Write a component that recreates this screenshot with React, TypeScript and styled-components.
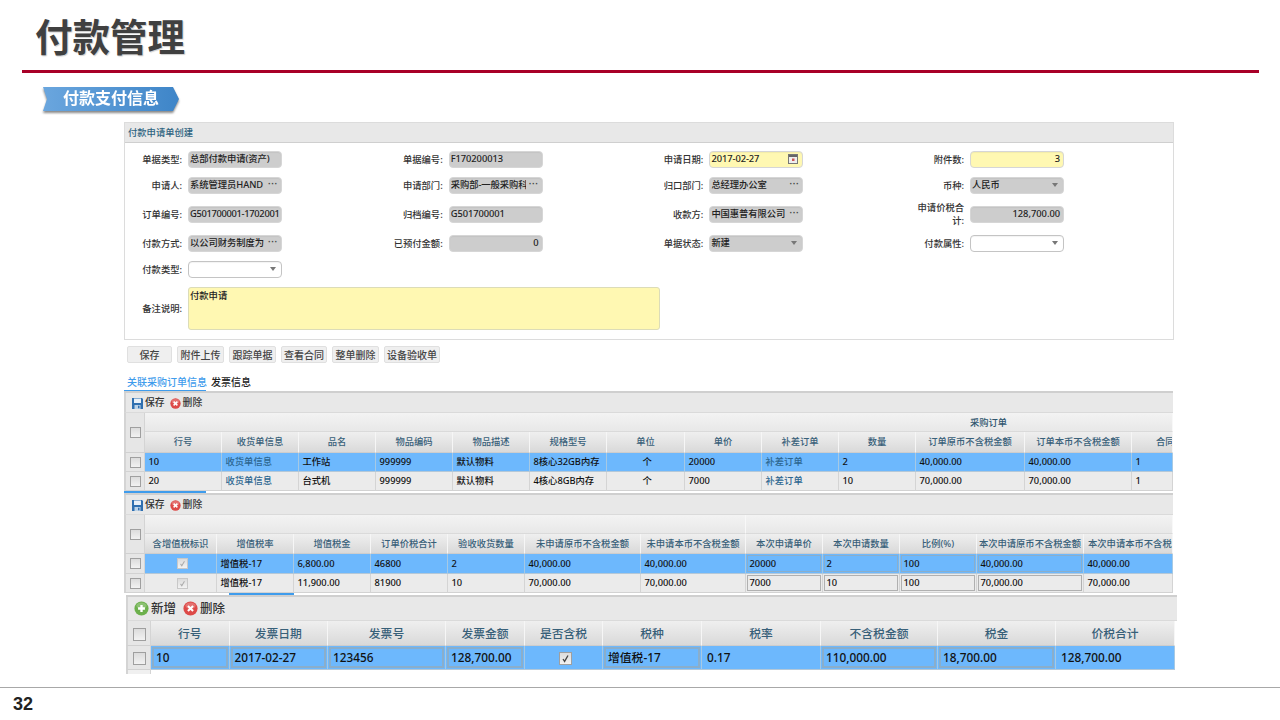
import React from "react";
import styled, { createGlobalStyle } from "styled-components";

const Global = createGlobalStyle`
  html, body { margin: 0; padding: 0; background: #fff; }
  body { font-family: "Noto Sans", "Noto Sans CJK SC", sans-serif; }
  * { box-sizing: border-box; }
`;

const CJK = `"Noto Sans CJK SC", "Noto Sans", sans-serif`;
const UI = `"Noto Sans", "Noto Sans CJK SC", sans-serif`;

const Page = styled.div`
  width: 1280px;
  height: 720px;
  display: flex;
  flex-direction: column;
  overflow: hidden;
  position: relative;
`;
const Header = styled.header`
  height: 70px;
  padding-left: 35px;
  display: flex;
  align-items: center;
`;
const Title = styled.h1`
  margin: 0;
  font: 700 37.5px/1 ${CJK};
  color: #404040;
  text-shadow: 1px 1px 1px rgba(60, 60, 60, 0.25);
`;
const Rule = styled.div`
  height: 3px;
  margin: 0 21px 0 22px;
  background: #a80028;
`;
const RibbonWrap = styled.div`
  margin: 14px 0 10px 43px;
  width: 136px;
  height: 25px;
  filter: drop-shadow(0 2px 1px rgba(40, 40, 40, 0.55));
`;
const Ribbon = styled.div`
  width: 136px;
  height: 24px;
  padding: 0 0 5px 20px;
  display: flex;
  align-items: center;
  background: linear-gradient(90deg, #6aa6de, #3e85c8);
  clip-path: polygon(0 0, 130px 0, 136px 12px, 130px 24px, 0 24px, 4px 12px);
  font: 700 16px/1 ${CJK};
  color: #fff;
`;
const Body = styled.main`
  margin-left: 124px;
  width: 1053px;
  display: flex;
  flex-direction: column;
  font: 500 9.3px/1.2 ${UI};
  color: #222;
`;
const Panel = styled.section`
  width: 1050px;
  border: 1px solid #dcdcdc;
`;
const PanelTitle = styled.div`
  height: 20px;
  padding-left: 3px;
  display: flex;
  align-items: center;
  background: #e8e8e8;
  border-bottom: 1px solid #cfcfcf;
  color: #2e6380;
`;
const FormBody = styled.div`
  padding: 3px 0 9px;
`;
const FormGrid = styled.div`
  display: grid;
  grid-template-columns: repeat(4, 260.7px);
  grid-template-rows: 26px 26px 32px 26px 26px;
`;
const Field = styled.div`
  display: grid;
  grid-template-columns: 57px 94px;
  column-gap: 6px;
  align-items: center;
`;
const Label = styled.label`
  text-align: right;
  white-space: pre-line;
  line-height: 13px;
  color: #333;
`;
const bg: Record<string, string> = { gray: "#cdcdcd", yellow: "#fff8b2", white: "#fff" };
const Input = styled.div<{ $tone: string; $right?: boolean }>`
  height: 17px;
  padding: 0 1px;
  display: flex;
  align-items: center;
  gap: 3px;
  background: ${(p) => bg[p.$tone]};
  border: 1px solid ${(p) => (p.$tone === "white" ? "#c4c4c4" : "#d6d6d6")};
  border-radius: 4px;
  box-shadow: inset 0 1px 1px rgba(0, 0, 0, 0.05);
  justify-content: ${(p) => (p.$right ? "flex-end" : "flex-start")};
  color: #222;
`;
const InputText = styled.span<{ $tight?: boolean }>`
  flex: 1;
  min-width: 0;
  overflow: hidden;
  white-space: nowrap;
  letter-spacing: ${(p) => (p.$tight ? "-0.3px" : "-0.05px")};
`;
const RightText = styled.span`
  margin-right: 2px;
  white-space: nowrap;
`;
const Dots = styled.span`
  flex: none;
  width: 10px;
  margin-right: 2px;
  font: 700 9px/1 "Liberation Sans", sans-serif;
  letter-spacing: 0.3px;
  color: #444;
  position: relative;
  top: -1px;
`;
const Caret = styled.span`
  flex: none;
  width: 0;
  height: 0;
  margin-right: 4px;
  border-left: 3.5px solid transparent;
  border-right: 3.5px solid transparent;
  border-top: 4px solid #777;
`;
const RemarkRow = styled.div`
  margin-top: 5px;
  display: grid;
  grid-template-columns: 57px 472px;
  column-gap: 6px;
  align-items: center;
`;
const Remark = styled.div`
  height: 43px;
  padding: 2px 1px;
  background: #fff8b2;
  border: 1px solid #dcdcb8;
  border-radius: 3px;
`;
const Actions = styled.div`
  margin: 6px 0 0 3px;
  display: flex;
  height: 17px;
  gap: 5px;
`;
const Action = styled.button<{ $w: number }>`
  width: ${(p) => p.$w}px;
  height: 17px;
  padding: 0;
  font: inherit;
  font-size: 10px;
  color: #444;
  background: #efefef;
  border: 1px solid #e0e0e0;
  border-radius: 2px;
`;
const Tabs = styled.div`
  margin-top: 9px;
  height: 19px;
  display: flex;
  align-items: center;
  padding-top: 2px;
`;
const Tab = styled.div<{ $active?: boolean }>`
  width: ${(p) => (p.$active ? "82px" : "auto")};
  padding-left: ${(p) => (p.$active ? "3px" : "5px")};
  height: 19px;
  display: flex;
  align-items: center;
  font-size: 10px;
  white-space: nowrap;
  color: ${(p) => (p.$active ? "#3f9cec" : "#222")};
  border-bottom: ${(p) => (p.$active ? "2px solid #3f9cec" : "2px solid transparent")};
`;
const Grid = styled.section<{ $w: number; $big?: boolean }>`
  width: ${(p) => p.$w}px;
  margin-left: ${(p) => (p.$big ? "2px" : "0")};
  background: #fff;
  border-top: 2px solid #cfcfcf;
  overflow: hidden;
  flex: none;
  ${(p) => (p.$big ? "font-size: 11.8px;" : "")}
`;
const Toolbar = styled.div<{ $big?: boolean }>`
  height: ${(p) => (p.$big ? 24 : 20)}px;
  display: flex;
  align-items: center;
  gap: ${(p) => (p.$big ? 7 : 5)}px;
  padding: ${(p) => (p.$big ? "0 0 0 6px" : "1px 0 0 6px")};
  background: #e8e8e8;
  border-bottom: 1px solid #dadada;
  border-left: 2px solid #d4d4d4;
`;
const Tool = styled.span<{ $big?: boolean }>`
  display: flex;
  align-items: center;
  gap: 2px;
  font-size: ${(p) => (p.$big ? 12.5 : 9.8)}px;
  color: #333;
`;
const Table = styled.table<{ $w: number }>`
  table-layout: fixed;
  width: ${(p) => p.$w}px;
  border-collapse: separate;
  border-spacing: 0;
`;
const Col = styled.col<{ $w: number }>`
  width: ${(p) => p.$w}px;
`;
const CheckHead = styled.th`
  background: #e6e6e6;
  border-left: 2px solid #d4d4d4;
  border-right: 1px solid #d4d4d4;
  border-bottom: 1px solid #d0d0d0;
  padding: 0;
  text-align: center;
`;
const GroupCell = styled.th<{ $h: number; $pl?: number }>`
  height: ${(p) => p.$h}px;
  padding: 1px 0 0 ${(p) => p.$pl ?? 0}px;
  font-weight: 500;
  text-align: center;
  color: #2f566e;
  background: linear-gradient(#f3f3f3, #e8e8e8);
  border-right: 1px solid #f8f8f8;
  border-bottom: 1px solid #dadada;
  overflow: hidden;
  white-space: nowrap;
`;
const HeadCell = styled.th<{ $h: number; $pl?: number }>`
  height: ${(p) => p.$h}px;
  padding: 0 0 0 ${(p) => p.$pl ?? 0}px;
  font-weight: 500;
  text-align: ${(p) => (p.$pl ? "left" : "center")};
  color: #386079;
  background: linear-gradient(#efefef, #d9d9d9);
  border-right: 1px solid #f6f6f6;
  border-bottom: 1px solid #cdcdcd;
  overflow: hidden;
  white-space: nowrap;
`;
const CheckCell = styled.td<{ $h: number }>`
  height: ${(p) => p.$h}px;
  padding: 0;
  text-align: center;
  background: #e6e6e6;
  border-left: 2px solid #d4d4d4;
  border-right: 1px solid #d4d4d4;
  border-bottom: 1px solid #d2d2d2;
`;
const Cell = styled.td<{ $h: number; $sel?: boolean; $kind?: string; $big?: boolean; $boxed?: boolean }>`
  height: ${(p) => p.$h}px;
  padding: ${(p) => (p.$boxed ? "1px" : `0 0 0 ${p.$big ? 5 : 3.5}px`)};
  background: ${(p) => (p.$sel ? "#6db8fd" : "#ebebeb")};
  border-right: 1px solid ${(p) => (p.$sel ? "#a6c9e4" : "#d4d4d4")};
  border-bottom: 1px solid ${(p) => (p.$sel ? "#b4c8d8" : "#d2d2d2")};
  color: ${(p) => (p.$kind === "link" ? "#2c6690" : "#111")};
  text-align: ${(p) => (p.$kind === "center" || p.$kind === "check" ? "center" : "left")};
  overflow: hidden;
  white-space: nowrap;
`;
const CellBox = styled.div<{ $sel?: boolean; $big?: boolean }>`
  height: 100%;
  display: flex;
  align-items: center;
  padding-left: ${(p) => (p.$big ? 2 : 1.5)}px;
  border: ${(p) => (p.$big ? 2 : 1)}px solid ${(p) => (p.$sel ? "#8aaecb" : "#b0b0b0")};
  overflow: hidden;
`;
const Box = styled.span<{ $big?: boolean; $faint?: boolean }>`
  display: inline-flex;
  align-items: center;
  justify-content: center;
  vertical-align: middle;
  width: ${(p) => (p.$big ? 13 : 11)}px;
  height: ${(p) => (p.$big ? 13 : 11)}px;
  background: linear-gradient(#dcdcdc, #f2f2f2);
  border: 1px solid ${(p) => (p.$faint ? "#c8c8c8" : "#9f9f9f")};
`;
const Stub = styled.div`
  width: 25px;
  height: 4px;
  margin-left: 2px;
  background: #f0f0f0;
  border-left: 2px solid #d4d4d4;
  border-right: 1px solid #d4d4d4;
`;
const Bar = styled.div<{ $ml: number; $w: number }>`
  height: 2px;
  margin-left: ${(p) => p.$ml}px;
  width: ${(p) => p.$w}px;
  background: #3f9cec;
  flex: none;
`;
const Footer = styled.footer`
  margin-top: auto;
  height: 33px;
  padding-left: 13px;
  display: flex;
  align-items: center;
  border-top: 1px solid #a8a8a8;
  font: 700 18px/1 "Liberation Sans", sans-serif;
  color: #222;
`;
const CalendarGlyph = styled.svg`
  flex: none;
  margin-right: 3px;
`;

const Check = ({ checked, big, faint }: { checked?: boolean; big?: boolean; faint?: boolean }) => (
  <Box $big={big} $faint={faint}>
    {checked && (
      <svg width={big ? 9 : 7} height={big ? 9 : 7} viewBox="0 0 9 9">
        <path d="M2 5l1.6 2.4L7 1.5" fill="none" stroke={faint ? "#aaa" : "#444"} strokeWidth="1.3" />
      </svg>
    )}
  </Box>
);
const SaveIcon = () => (
  <svg width="11" height="11" viewBox="0 0 11 11">
    <path d="M0 0h10l1 1v10H0z" fill="#2f6fb0" />
    <rect x="2" y="0.5" width="7" height="4.5" fill="#e8f0f8" />
    <rect x="2.5" y="7" width="6" height="4" fill="#bcd3e8" />
    <rect x="6" y="7.7" width="1.5" height="2.6" fill="#2f6fb0" />
  </svg>
);
const RoundIcon = ({ size, fill, plus }: { size: number; fill: string; plus?: boolean }) => (
  <svg width={size} height={size} viewBox="0 0 14 14">
    <circle cx="7" cy="7" r="6.6" fill={fill} />
    <ellipse cx="7" cy="4.4" rx="4.8" ry="3" fill="#fff" opacity="0.22" />
    {plus ? (
      <path d="M7 3.8v6.4M3.8 7h6.4" stroke="#fff" strokeWidth="2.2" />
    ) : (
      <path d="M4.6 4.6l4.8 4.8M9.4 4.6l-4.8 4.8" stroke="#fff" strokeWidth="1.9" />
    )}
  </svg>
);
const CalendarIcon = () => (
  <CalendarGlyph width="10" height="10" viewBox="0 0 10 10">
    <rect x="0.5" y="0.5" width="9" height="9" fill="#eee" stroke="#777" />
    <rect x="1" y="1" width="8" height="2" fill="#666" />
    <rect x="4" y="4.5" width="2.5" height="2.5" fill="#c55" />
  </CalendarGlyph>
);

type F = { label: string; text?: string; tone: string; tail?: "dots" | "caret" | "cal"; right?: boolean; tight?: boolean };
const fields: F[] = [
  { label: "单据类型:", text: "总部付款申请(资产)", tone: "gray" },
  { label: "单据编号:", text: "F170200013", tone: "gray" },
  { label: "申请日期:", text: "2017-02-27", tone: "yellow", tail: "cal" },
  { label: "附件数:", text: "3", tone: "yellow", right: true },
  { label: "申请人:", text: "系统管理员HAND", tone: "gray", tail: "dots" },
  { label: "申请部门:", text: "采购部-一般采购科", tone: "gray", tail: "dots" },
  { label: "归口部门:", text: "总经理办公室", tone: "gray", tail: "dots" },
  { label: "币种:", text: "人民币", tone: "gray", tail: "caret" },
  { label: "订单编号:", text: "G501700001-1702001", tone: "gray", tight: true },
  { label: "归档编号:", text: "G501700001", tone: "gray" },
  { label: "收款方:", text: "中国惠普有限公司", tone: "gray", tail: "dots" },
  { label: "申请价税合\n计:", text: "128,700.00", tone: "gray", right: true },
  { label: "付款方式:", text: "以公司财务制度为", tone: "gray", tail: "dots" },
  { label: "已预付金额:", text: "0", tone: "gray", right: true },
  { label: "单据状态:", text: "新建", tone: "gray", tail: "caret" },
  { label: "付款属性:", tone: "white", tail: "caret" },
  { label: "付款类型:", tone: "white", tail: "caret" },
];

const actions: [string, number][] = [
  ["保存", 45], ["附件上传", 47], ["跟踪单据", 47], ["查看合同", 46], ["整单删除", 47], ["设备验收单", 56],
];

type C = string | { t: string; k: "link" | "center" | "check" | "box" | "faint" };
type Head = { t: string; w: number; pl?: number };
type Def = {
  width: number;
  checkW: number;
  big?: boolean;
  rowH: number;
  headH: number;
  groupH?: number;
  groups?: { span: number; title?: string; pl?: number }[];
  cols: Head[];
  rows: { sel?: boolean; cells: C[] }[];
};

const link = (t: string): C => ({ t, k: "link" });
const ctr = (t: string): C => ({ t, k: "center" });
const bx = (t: string): C => ({ t, k: "box" });

const grid1: Def = {
  width: 1049,
  checkW: 21,
  rowH: 19,
  headH: 21,
  groupH: 19,
  groups: [{ span: 13, title: "采购订单", pl: 660 }],
  cols: [
    { t: "行号", w: 77 }, { t: "收货单信息", w: 77 }, { t: "品名", w: 77 }, { t: "物品编码", w: 77 },
    { t: "物品描述", w: 77 }, { t: "规格型号", w: 77 }, { t: "单位", w: 78 }, { t: "单价", w: 77 },
    { t: "补差订单", w: 77 }, { t: "数量", w: 77 }, { t: "订单原币不含税金额", w: 109 },
    { t: "订单本币不含税金额", w: 107 }, { t: "合同数量", w: 41, pl: 24 },
  ],
  rows: [
    { sel: true, cells: ["10", link("收货单信息"), "工作站", "999999", "默认物料", "8核心32GB内存", ctr("个"), "20000", link("补差订单"), "2", "40,000.00", "40,000.00", "1"] },
    { cells: ["20", link("收货单信息"), "台式机", "999999", "默认物料", "4核心8GB内存", ctr("个"), "7000", link("补差订单"), "10", "70,000.00", "70,000.00", "1"] },
  ],
};

const grid2: Def = {
  width: 1049,
  checkW: 21,
  rowH: 19.5,
  headH: 20,
  groupH: 19,
  groups: [{ span: 7 }, { span: 5 }],
  cols: [
    { t: "含增值税标识", w: 72 }, { t: "增值税率", w: 77 }, { t: "增值税金", w: 77 }, { t: "订单价税合计", w: 77 },
    { t: "验收收货数量", w: 77 }, { t: "未申请原币不含税金额", w: 116 }, { t: "未申请本币不含税金额", w: 105 },
    { t: "本次申请单价", w: 77 }, { t: "本次申请数量", w: 77 }, { t: "比例(%)", w: 77 },
    { t: "本次申请原币不含税金额", w: 107 }, { t: "本次申请本币不含税金额", w: 89, pl: 4 },
  ],
  rows: [
    { sel: true, cells: [{ t: "", k: "faint" }, "增值税-17", "6,800.00", "46800", "2", "40,000.00", "40,000.00", bx("20000"), bx("2"), bx("100"), bx("40,000.00"), "40,000.00"] },
    { cells: [{ t: "", k: "faint" }, "增值税-17", "11,900.00", "81900", "10", "70,000.00", "70,000.00", bx("7000"), bx("10"), bx("100"), bx("70,000.00"), "70,000.00"] },
  ],
};

const grid3: Def = {
  width: 1049,
  checkW: 25,
  big: true,
  rowH: 24,
  headH: 25,
  cols: [
    { t: "行号", w: 78.5 }, { t: "发票日期", w: 98.5 }, { t: "发票号", w: 118 }, { t: "发票金额", w: 79 },
    { t: "是否含税", w: 78 }, { t: "税种", w: 99 }, { t: "税率", w: 119 }, { t: "不含税金额", w: 117 },
    { t: "税金", w: 118 }, { t: "价税合计", w: 119 },
  ],
  rows: [
    { sel: true, cells: [bx("10"), bx("2017-02-27"), bx("123456"), bx("128,700.00"), { t: "", k: "check" }, bx("增值税-17"), "0.17", bx("110,000.00"), bx("18,700.00"), "128,700.00"] },
  ],
};

const DataGrid = ({ d, tools, gridW }: { d: Def; tools: React.ReactNode; gridW: number }) => (
  <Grid $w={gridW} $big={d.big}>
    <Toolbar $big={d.big}>{tools}</Toolbar>
    <Table $w={d.width}>
      <colgroup>
        <Col $w={d.checkW} />
        {d.cols.map((c, i) => <Col key={i} $w={c.w} />)}
      </colgroup>
      <thead>
        {d.groups && (
          <tr>
            <CheckHead rowSpan={2}><Check /></CheckHead>
            {d.groups.map((g, i) => (
              <GroupCell key={i} colSpan={g.span} $h={d.groupH!} $pl={g.pl}>{g.title}</GroupCell>
            ))}
          </tr>
        )}
        <tr>
          {!d.groups && <CheckHead><Check big={d.big} /></CheckHead>}
          {d.cols.map((c, i) => <HeadCell key={i} $h={d.headH} $pl={c.pl}>{c.t}</HeadCell>)}
        </tr>
      </thead>
      <tbody>
        {d.rows.map((r, i) => (
          <tr key={i}>
            <CheckCell $h={d.rowH}><Check big={d.big} /></CheckCell>
            {r.cells.map((c, j) => {
              const o = typeof c === "string" ? { t: c, k: undefined } : c;
              if (o.k === "box") {
                return (
                  <Cell key={j} $h={d.rowH} $sel={r.sel} $boxed $big={d.big}>
                    <CellBox $sel={r.sel} $big={d.big}>{o.t}</CellBox>
                  </Cell>
                );
              }
              if (o.k === "check" || o.k === "faint") {
                return (
                  <Cell key={j} $h={d.rowH} $sel={r.sel} $kind="check">
                    <Check checked big={d.big} faint={o.k === "faint"} />
                  </Cell>
                );
              }
              return <Cell key={j} $h={d.rowH} $sel={r.sel} $kind={o.k} $big={d.big}>{o.t}</Cell>;
            })}
          </tr>
        ))}
      </tbody>
    </Table>
  </Grid>
);

const SmallTools = () => (
  <>
    <Tool><SaveIcon />保存</Tool>
    <Tool><RoundIcon size={11} fill="#dd4a48" />删除</Tool>
  </>
);

export default function App() {
  return (
    <Page>
      <Global />
      <Header><Title>付款管理</Title></Header>
      <Rule />
      <RibbonWrap><Ribbon>付款支付信息</Ribbon></RibbonWrap>
      <Body>
        <Panel>
          <PanelTitle>付款申请单创建</PanelTitle>
          <FormBody>
            <FormGrid>
              {fields.map((f) => (
                <Field key={f.label}>
                  <Label>{f.label}</Label>
                  <Input $tone={f.tone} $right={f.right}>
                    {f.right ? <RightText>{f.text}</RightText> : <InputText $tight={f.tight}>{f.text}</InputText>}
                    {f.tail === "dots" && <Dots>···</Dots>}
                    {f.tail === "caret" && <Caret />}
                    {f.tail === "cal" && <CalendarIcon />}
                  </Input>
                </Field>
              ))}
            </FormGrid>
            <RemarkRow>
              <Label>备注说明:</Label>
              <Remark>付款申请</Remark>
            </RemarkRow>
          </FormBody>
        </Panel>
        <Actions>
          {actions.map(([t, w]) => <Action key={t} $w={w}>{t}</Action>)}
        </Actions>
        <Tabs>
          <Tab $active>关联采购订单信息</Tab>
          <Tab>发票信息</Tab>
        </Tabs>
        <DataGrid d={grid1} gridW={1049} tools={<SmallTools />} />
        <Bar $ml={0} $w={82} />
        <DataGrid d={grid2} gridW={1049} tools={<SmallTools />} />
        <Bar $ml={105} $w={65} />
        <DataGrid
          d={grid3}
          gridW={1051}
          tools={
            <>
              <Tool $big><RoundIcon size={15} fill="#6cb04c" plus />新增</Tool>
              <Tool $big><RoundIcon size={15} fill="#dd4a48" />删除</Tool>
            </>
          }
        />
        <Stub />
      </Body>
      <Footer>32</Footer>
    </Page>
  );
}
